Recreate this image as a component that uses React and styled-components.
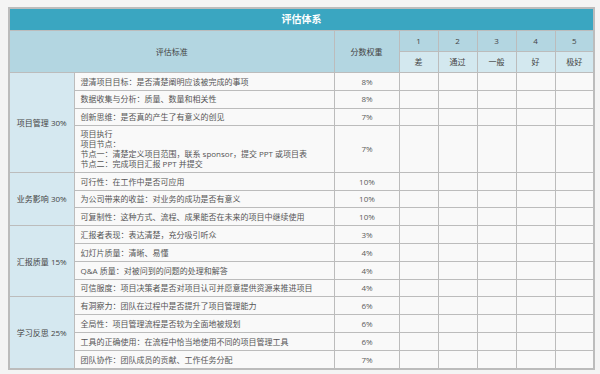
import React from 'react';
import styled, { createGlobalStyle } from 'styled-components';

const GlobalStyle = createGlobalStyle`
  html, body {
    margin: 0;
    padding: 0;
    background: #f4f4f4;
  }
  body {
    font-family: "Open Sans", "Noto Sans CJK SC", sans-serif;
  }
`;

const Page = styled.div`
  padding: 7px 8px;
`;

const Table = styled.table`
  width: 585px;
  border-collapse: collapse;
  table-layout: fixed;
  border: 2px solid #bcbcbc;
  font-size: 8px;
  line-height: 9.4px;
  color: #555;
`;

const Col = styled.col`
  width: ${p => p.w}px;
`;

const TitleCell = styled.th`
  background: #3aa6c1;
  color: #fff;
  font-size: 10px;
  font-weight: 700;
  height: 21px;
  padding: 0;
  border: 1px solid #bcbcbc;
  text-align: center;
`;

const HeadCell = styled.th`
  background: ${p => (p.light ? '#d3e8ef' : '#b3d6e1')};
  color: #444;
  font-weight: 400;
  height: ${p => (p.tall ? 41 : 20)}px;
  padding: 0;
  border: 1px solid #bcbcbc;
  text-align: center;
`;

const GroupCell = styled.td`
  background: #d5e8f0;
  color: #444;
  text-align: center;
  padding: 0 4px;
  border: 1px solid #bcbcbc;
`;

const Cell = styled.td`
  background: #f9f9f9;
  height: ${p => (p.big ? 45.5 : 16.8)}px;
  padding: 0 5px 0 6px;
  border: 1px solid #bcbcbc;
  text-align: ${p => (p.center ? 'center' : 'left')};
  vertical-align: middle;
  white-space: nowrap;
  overflow: hidden;
  color: ${p => (p.center ? '#5a5a5a' : '#555')};
`;

const Line = styled.div`
  line-height: 10px;
`;

const groups = [
  {
    name: '项目管理 30%',
    items: [
      ['澄清项目目标：是否清楚阐明应该被完成的事项', '8%'],
      ['数据收集与分析：质量、数量和相关性', '8%'],
      ['创新思维：是否真的产生了有意义的创见', '7%'],
      [
        ['项目执行', '项目节点：', '节点一：清楚定义项目范围，联系 sponsor，提交 PPT 或项目表', '节点二：完成项目汇报 PPT 并提交'],
        '7%',
      ],
    ],
  },
  {
    name: '业务影响 30%',
    items: [
      ['可行性：在工作中是否可应用', '10%'],
      ['为公司带来的收益：对业务的成功是否有意义', '10%'],
      ['可复制性：这种方式、流程、成果能否在未来的项目中继续使用', '10%'],
    ],
  },
  {
    name: '汇报质量 15%',
    items: [
      ['汇报者表现：表达清楚，充分吸引听众', '3%'],
      ['幻灯片质量：清晰、易懂', '4%'],
      ['Q&A 质量：对被问到的问题的处理和解答', '4%'],
      ['可信服度：项目决策者是否对项目认可并愿意提供资源来推进项目', '4%'],
    ],
  },
  {
    name: '学习反思 25%',
    items: [
      ['有洞察力：团队在过程中是否提升了项目管理能力', '6%'],
      ['全局性：项目管理流程是否较为全面地被规划', '6%'],
      ['工具的正确使用：在流程中恰当地使用不同的项目管理工具', '6%'],
      ['团队协作：团队成员的贡献、工作任务分配', '7%'],
    ],
  },
];

const scores = [
  ['1', '差'],
  ['2', '通过'],
  ['3', '一般'],
  ['4', '好'],
  ['5', '极好'],
];

const widths = [65, 260, 65, 39, 39, 39, 39, 39];

export default function App() {
  return (
    <Page>
      <GlobalStyle />
      <Table>
        <colgroup>
          {widths.map((w, i) => (
            <Col key={i} w={w} />
          ))}
        </colgroup>
        <thead>
          <tr>
            <TitleCell colSpan={8}>评估体系</TitleCell>
          </tr>
          <tr>
            <HeadCell colSpan={2} rowSpan={2} tall>
              评估标准
            </HeadCell>
            <HeadCell rowSpan={2} tall>
              分数权重
            </HeadCell>
            {scores.map(([n]) => (
              <HeadCell key={n}>{n}</HeadCell>
            ))}
          </tr>
          <tr>
            {scores.map(([n, label]) => (
              <HeadCell key={n} light>
                {label}
              </HeadCell>
            ))}
          </tr>
        </thead>
        <tbody>
          {groups.map(g =>
            g.items.map(([text, weight], i) => {
              const big = Array.isArray(text);
              return (
                <tr key={g.name + i}>
                  {i === 0 && <GroupCell rowSpan={g.items.length}>{g.name}</GroupCell>}
                  <Cell big={big}>
                    {big ? text.map((line, k) => <Line key={k}>{line}</Line>) : text}
                  </Cell>
                  <Cell center>{weight}</Cell>
                  {scores.map(([n]) => (
                    <Cell key={n} />
                  ))}
                </tr>
              );
            })
          )}
        </tbody>
      </Table>
    </Page>
  );
}
